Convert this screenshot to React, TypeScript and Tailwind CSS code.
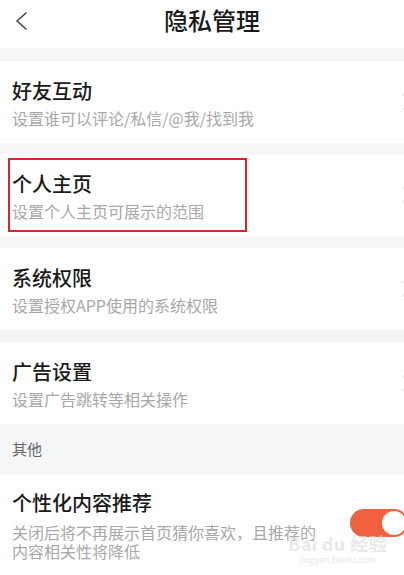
import React from "react";

const font = { fontFamily: '"Noto Sans CJK SC", "Noto Sans", sans-serif' };

function Chevron() {
  return (
    <svg width="10" height="18" viewBox="0 0 10 18" fill="none" className="shrink-0">
      <path d="M2 2 L8 9 L2 16" stroke="#b5b5b5" strokeWidth="1.6" strokeLinecap="round" strokeLinejoin="round" />
    </svg>
  );
}

function Row({ title, sub, boxed }: { title: string; sub: string; boxed?: boolean }) {
  return (
    <div className="relative bg-white flex items-center pl-3 pr-[12px] h-[82px]">
      <div className="flex-1 flex flex-col pt-[2px]">
        <div className="text-[20px] leading-7 font-medium text-[#1a1a1a]">{title}</div>
        <div className="text-[16px] leading-[22px] text-[#a8a8a8] mt-[2px]">{sub}</div>
      </div>
      <Chevron />
      {boxed && (
        <div className="absolute left-[8px] top-[4px] w-[239px] h-[74px] border-2 border-[#d9262b]" />
      )}
    </div>
  );
}

export default function App() {
  return (
    <div className="w-[404px] h-[575px] overflow-hidden bg-[#f5f6f7]" style={font}>
      <div className="w-[424px]">
        <div className="h-12 bg-white relative flex justify-center">
          <svg width="14" height="20" viewBox="0 0 14 20" fill="none" className="absolute left-[14px] top-[11px]">
            <path d="M12 2 L3 10 L12 18" stroke="#444" strokeWidth="1.6" strokeLinecap="round" strokeLinejoin="round" />
          </svg>
          <div className="pt-[5px] text-[24px] leading-[30px] font-medium text-[#1a1a1a]">隐私管理</div>
        </div>
        <div className="h-[13px]" />
        <Row title="好友互动" sub="设置谁可以评论/私信/@我/找到我" />
        <div className="h-[11px]" />
        <Row title="个人主页" sub="设置个人主页可展示的范围" boxed />
        <div className="h-[12px]" />
        <Row title="系统权限" sub="设置授权APP使用的系统权限" />
        <div className="h-[12px]" />
        <Row title="广告设置" sub="设置广告跳转等相关操作" />
        <div className="h-[51px] flex items-center pl-3 text-[15px] text-[#666]">其他</div>
        <div className="bg-white relative flex items-start pl-3 pr-4 pt-[14px] h-[110px]">
          <div className="flex-1 flex flex-col">
            <div className="text-[20px] leading-7 font-medium text-[#1a1a1a]">个性化内容推荐</div>
            <div className="text-[16px] leading-[19px] text-[#a8a8a8] mt-[6px]">
              关闭后将不再展示首页猜你喜欢，且推荐的
              <br />
              内容相关性将降低
            </div>
          </div>
          <div className="mt-[20px] w-[58px] h-[28px] rounded-full bg-[#f2613d] flex items-center justify-end pr-[2px] shrink-0">
            <div className="w-[24px] h-[24px] rounded-full bg-white" />
          </div>
          <div className="absolute left-[288px] top-[58px] text-[#dcdcdc] opacity-60 flex flex-col items-center pointer-events-none">
            <div className="text-[18px] leading-[20px] font-bold tracking-wide">Bai<span className="ml-1">du</span> 经验</div>
            <div className="text-[9px] leading-[11px] mt-[1px]">jingyan.baidu.com</div>
          </div>
        </div>
      </div>
    </div>
  );
}
